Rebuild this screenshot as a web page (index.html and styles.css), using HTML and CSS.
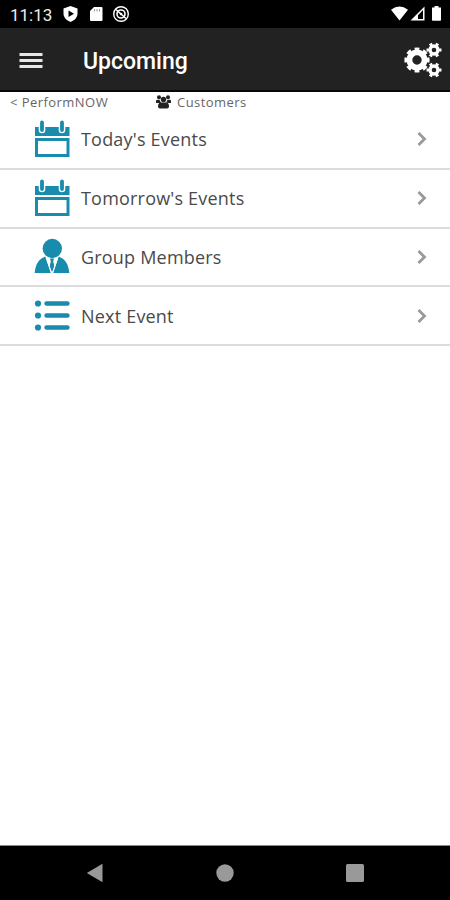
FILE: index.html
```html
<!DOCTYPE html>
<html lang="en">
<head>
  <meta charset="UTF-8">
  <meta name="viewport" content="width=device-width, initial-scale=1.0">
  <title>Upcoming</title>
  <link rel="stylesheet" href="styles.css">
</head>
<body>
  <svg class="defs" width="0" height="0">
    <symbol id="calendar" viewBox="0 0 36 38">
      <path fill="#198bad" d="M1 7h34.500v9H1z"/>
      <path stroke="#fff" stroke-width="6.600" stroke-linecap="round" d="M8 3v7M28 3v7"/>
      <path stroke="#198bad" stroke-width="3.800" stroke-linecap="round" d="M8 2.500v7.500M28 2.500v7.500"/>
      <path fill="none" stroke="#198bad" stroke-width="3" d="M2.500 19.500H34v16H2.500z"/>
    </symbol>
    <symbol id="person" viewBox="0 0 36 38">
      <circle cx="18.300" cy="10.500" r="9.700" fill="#198bad"/>
      <path fill="#198bad" d="M.7 35C1.500 26 5 20.500 11.500 18.500L17 35zM35.300 35C34.500 26 31 20.500 24.500 18.500L19 35z"/>
      <path fill="#198bad" d="M16 20.500h4l-.8 3 1.500 6L18 34.500l-2.700-5 1.500-6z"/>
      <path fill="none" stroke="#fff" stroke-width="1.200" d="M12 19l5.500 16M24 19l-5.500 16"/>
    </symbol>
    <symbol id="list" viewBox="0 0 36 38">
      <g fill="#198bad"><circle cx="4" cy="6.500" r="3.100"/><circle cx="4" cy="18.500" r="3.100"/><circle cx="4" cy="30.500" r="3.100"/></g>
      <path stroke="#198bad" stroke-width="4.400" stroke-linecap="round" d="M12.500 6.500h21M12.500 18.500h21M12.500 30.500h21"/>
    </symbol>
    <symbol id="chevron" viewBox="0 0 10 16">
      <path fill="none" stroke="#999" stroke-width="2.800" d="M1.500 2l6 6-6 6"/>
    </symbol>
  </svg>

  <div class="status">
    <span class="time">11:13</span>
    <svg class="notices" width="68" height="18" viewBox="0 0 68 18">
      <path fill="#fff" d="M7.500 1l7 2.600v5c0 4-3 7-7 8.400-4-1.400-7-4.400-7-8.400v-5z"/>
      <path d="M5.500 5.500l5.500 3.300-5.500 3.300z"/>
      <path fill="#fff" d="M31 2h7.500q1 0 1 1v12q0 1-1 1H28q-1 0-1-1V6z"/>
      <path stroke="#999" d="M31.500 4v2.500M34 4v2.500M36.500 4v2.500"/>
      <g fill="none" stroke="#fff"><circle cx="58" cy="9" r="7.300" stroke-width="1.400"/><circle cx="58" cy="9" r="4" stroke-width="1.600"/><path stroke-width="1.600" d="M53 4.500l10 9"/></g>
      <circle cx="58" cy="9" r="1.300" fill="#fff"/>
    </svg>
    <svg class="signals" width="50" height="16" viewBox="0 0 50 16">
      <path fill="#fff" d="M0 3.700q8.500-6.400 17 0L8.500 14.500z"/>
      <path fill="#fff" fill-rule="evenodd" d="M33.500.5v14H19.500zM32 4l-5 5.300V13h5z"/>
      <path fill="#fff" d="M43.500 1.500V0h4v1.500H50V14q0 .8-.8.8h-7.400q-.8 0-.8-.8V1.500z"/>
    </svg>
  </div>

  <header class="header">
    <svg class="menu" width="24" height="18" viewBox="0 0 24 18">
      <path stroke="#e5e8e5" stroke-width="3" d="M.5 3.500h23M.5 9.500h23M.5 15.500h23"/>
    </svg>
    <h1>Upcoming</h1>
    <svg class="gears" width="38" height="36" viewBox="0 0 38 36" fill="none" stroke="#fff">
      <circle cx="13" cy="18" r="7.600" stroke-width="5.800"/>
      <circle cx="13" cy="18" r="10.900" stroke-width="3.400" pathLength="16" stroke-dasharray="1.100 .9" stroke-dashoffset=".55"/>
      <circle cx="30" cy="8" r="4" stroke-width="3.400"/>
      <circle cx="30" cy="8" r="6" stroke-width="3" pathLength="12" stroke-dasharray=".9 1.100" stroke-dashoffset=".45"/>
      <circle cx="30" cy="28" r="4" stroke-width="3.400"/>
      <circle cx="30" cy="28" r="6" stroke-width="3" pathLength="12" stroke-dasharray=".9 1.100" stroke-dashoffset=".45"/>
    </svg>
  </header>

  <nav class="crumbs">
    <span class="back">&lt; PerformNOW</span>
    <svg width="15" height="14" viewBox="0 0 15 14" fill="#222">
      <circle cx="3" cy="2.300" r="2"/><circle cx="12" cy="2.300" r="2"/><circle cx="7.500" cy="4.500" r="2.700"/>
      <path d="M0 8V6q0-1.300 1.500-1.300h2L5 8zM15 8V6q0-1.300-1.500-1.300h-2L10 8zM2 11.500Q2 7.500 5 7.500h5q3 0 3 4 0 2-2 2H4q-2 0-2-2z"/>
    </svg>
    <span class="customers">Customers</span>
  </nav>

  <main class="list">
    <div class="row">
      <svg class="icon"><use href="#calendar"/></svg>
      <span class="label">Today's Events</span>
      <svg class="chevron"><use href="#chevron"/></svg>
    </div>
    <div class="row">
      <svg class="icon"><use href="#calendar"/></svg>
      <span class="label">Tomorrow's Events</span>
      <svg class="chevron"><use href="#chevron"/></svg>
    </div>
    <div class="row">
      <svg class="icon"><use href="#person"/></svg>
      <span class="label">Group Members</span>
      <svg class="chevron"><use href="#chevron"/></svg>
    </div>
    <div class="row">
      <svg class="icon"><use href="#list"/></svg>
      <span class="label">Next Event</span>
      <svg class="chevron"><use href="#chevron"/></svg>
    </div>
  </main>

  <footer class="navbar">
    <svg width="18" height="20" viewBox="0 0 18 20"><path fill="#999" d="M16.500.8v18.400L.8 10z"/></svg>
    <svg width="18" height="20" viewBox="0 0 18 20"><circle cx="9" cy="10" r="8.700" fill="#999"/></svg>
    <svg width="18" height="20" viewBox="0 0 18 20"><rect y="1" width="18" height="18" rx="1.500" fill="#999"/></svg>
  </footer>
</body>
</html>
```

FILE: styles.css
```css
* {
  box-sizing: border-box;
}
body {
  margin: 0;
  height: 900px;
  display: flex;
  flex-direction: column;
  background-color: #fff;
  font-family: "Open Sans", sans-serif;
  color: #666;
}
svg {
  display: block;
  flex: none;
}
.defs {
  position: absolute;
}
.status {
  height: 28px;
  background-color: #000;
  display: flex;
  align-items: center;
  padding: 0 9px 0 10px;
}
.time {
  width: 53px;
  color: #eee;
  font: 400 17px Roboto, sans-serif;
  padding-top: 2px;
}
.signals {
  margin-left: auto;
}
.header {
  height: 64px;
  background-color: #222;
  border-bottom: 2px solid #080808;
  display: flex;
  align-items: center;
  padding: 2px 8px 0 19px;
}
.header h1 {
  margin: 0 0 0 40px;
  padding-top: 3px;
  color: #fff;
  font: 500 23px Roboto, sans-serif;
}
.gears {
  margin-left: auto;
}
.crumbs {
  height: 19px;
  display: flex;
  align-items: center;
  font-size: 13px;
  line-height: 18px;
  letter-spacing: 0.45px;
  padding-left: 10px;
}
.back {
  width: 146px;
}
.customers {
  margin-left: 6px;
}
.row {
  height: 58.75px;
  display: flex;
  align-items: center;
  border-bottom: 2px solid #dcdcdc;
  padding: 0 23px 0 34px;
}
.icon {
  width: 36px;
  height: 38px;
}
.label {
  margin-left: 11px;
  font-size: 18px;
  letter-spacing: 0.2px;
  color: #4a4a4a;
}
.chevron {
  width: 10px;
  height: 16px;
  margin-left: auto;
}
.navbar {
  margin-top: auto;
  height: 55px;
  background-color: #000;
  border-top: 1px solid #888;
  display: flex;
  justify-content: center;
  gap: 112px;
  padding-top: 17px;
}
```
